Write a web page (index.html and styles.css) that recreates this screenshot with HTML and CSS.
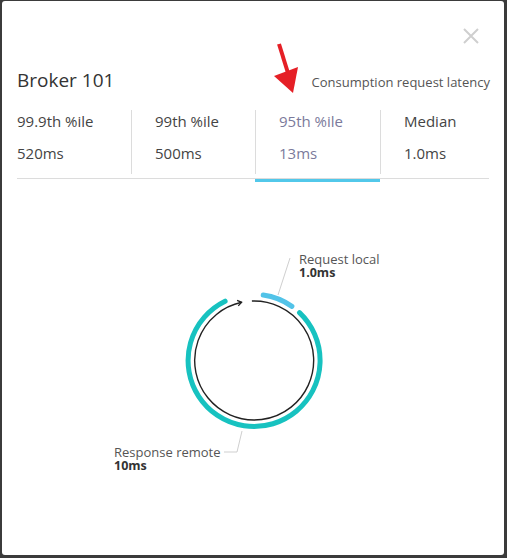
FILE: index.html
```html
<!DOCTYPE html>
<html>
<head>
<meta charset="utf-8">
<link rel="stylesheet" href="styles.css">
</head>
<body>
<div class="card">
  <div class="close-row">
    <svg class="close" width="16" height="16" viewBox="0 0 16 16"><path d="M1 1L15 15M15 1L1 15" stroke="#cfcfcf" stroke-width="2" fill="none"/></svg>
  </div>
  <div class="title-row">
    <h1 class="title">Broker 101</h1>
    <span class="subtitle">Consumption request latency</span>
  </div>
  <div class="tabs">
    <div class="tab"><div class="tab-inner"><div class="label">99.9th %ile</div><div class="value">520ms</div></div></div>
    <div class="tab"><div class="tab-inner"><div class="label">99th %ile</div><div class="value">500ms</div></div></div>
    <div class="tab active"><div class="tab-inner"><div class="label">95th %ile</div><div class="value">13ms</div></div></div>
    <div class="tab"><div class="tab-inner"><div class="label">Median</div><div class="value">1.0ms</div></div></div>
  </div>
  <div class="chart">
    <svg class="chart-svg" width="472" height="330" viewBox="17 182 472 330">
      <defs>
        <marker id="ah" markerWidth="8" markerHeight="8" refX="6" refY="4" orient="auto" markerUnits="userSpaceOnUse">
          <path d="M2 1.2L6 4L2 6.8" fill="none" stroke="#222" stroke-width="1.3"/>
        </marker>
      </defs>
      <path d="M263.2 295.1 A66 66 0 0 1 291.9 306.4" fill="none" stroke="#52c3e8" stroke-width="5" stroke-linecap="round"/>
      <path d="M299.5 312.6 A66 66 0 1 1 225.1 301.2" fill="none" stroke="#17c2c0" stroke-width="5" stroke-linecap="round"/>
      <path d="M251.9 301.0 A59.5 59.5 0 1 1 241.6 302.3" fill="none" stroke="#222" stroke-width="1.4" marker-end="url(#ah)"/>
      <path d="M290 258L278 295" stroke="#cfcfcf" stroke-width="1" fill="none"/>
      <path d="M242 431L237 452L224 452" stroke="#cfcfcf" stroke-width="1" fill="none"/>
    </svg>
    <div class="note note-local"><div class="lbl">Request local</div><div class="val">1.0ms</div></div>
    <div class="note note-remote"><div class="lbl">Response remote</div><div class="val">10ms</div></div>
  </div>
  <svg class="pointer" width="30" height="56" viewBox="270 40 30 56">
    <path d="M279 44L288 73" stroke="#e51f26" stroke-width="4" fill="none"/>
    <path d="M274 76L298 67L293 93Z" fill="#e51f26"/>
  </svg>
</div>
</body>
</html>
```

FILE: styles.css
```css
* { box-sizing: border-box; }
html, body { margin: 0; padding: 0; }
body {
  background: #3b3b3b;
  width: 507px;
  height: 558px;
  overflow: hidden;
  font-family: "Open Sans", "Noto Sans", sans-serif;
}
.card {
  position: relative;
  margin: 1px 3px 0 2px;
  height: 554px;
  background: #fff;
  border-radius: 3px;
  padding: 27px 15px 0 15px;
}
.close-row {
  display: flex;
  justify-content: flex-end;
  height: 16px;
  padding-right: 10px;
}
.close { display: block; }
.title-row {
  margin-top: 24px;
  display: flex;
  justify-content: space-between;
  align-items: baseline;
  height: 24px;
}
.title {
  margin: 0;
  font-size: 19px;
  font-weight: 400;
  line-height: 24px;
  color: #333;
}
.subtitle {
  font-size: 13px;
  color: #555;
  margin-right: -1px;
}
.tabs {
  margin-top: 18px;
  display: grid;
  grid-template-columns: 114px 124px 125px 1fr;
  border-bottom: 1px solid #dcdcdc;
  padding-bottom: 4px;
}
.tab { position: relative; }
.tab-inner {
  height: 64px;
  padding-top: 1px;
}
.tab + .tab .tab-inner {
  border-left: 1px solid #dcdcdc;
  padding-left: 23px;
}
.label, .value {
  font-size: 15px;
  line-height: 20px;
  color: #444;
}
.value { margin-top: 12px; }
.active .label, .active .value { color: #7b7a9b; }
.active::after {
  content: "";
  position: absolute;
  left: 0;
  right: 0;
  bottom: -8px;
  height: 3px;
  background: #52c8ea;
}
.chart {
  margin-top: 3px;
  position: relative;
}
.chart-svg { display: block; }
.note {
  position: absolute;
  line-height: 14px;
  white-space: nowrap;
}
.note-local { left: 282px; top: 70px; }
.note-remote { left: 97px; top: 263px; }
.lbl { font-size: 13px; color: #555; }
.val { font-size: 12.5px; font-weight: 700; color: #333; }
.pointer {
  position: absolute;
  left: 268px;
  top: 39px;
}
```
